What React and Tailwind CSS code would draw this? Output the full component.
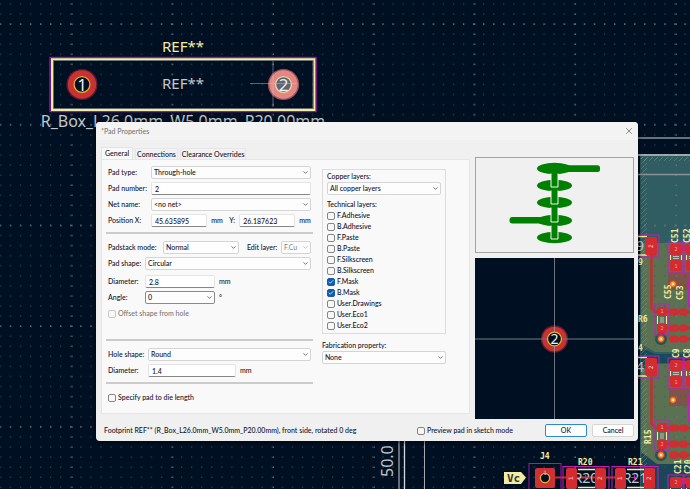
import React, { useState } from 'react';
import { Check, ChevronDown, X } from 'lucide-react';

const TECH_LAYERS = [
    'F.Adhesive',
    'B.Adhesive',
    'F.Paste',
    'B.Paste',
    'F.Silkscreen',
    'B.Silkscreen',
    'F.Mask',
    'B.Mask',
    'User.Drawings',
    'User.Eco1',
    'User.Eco2',
];

const MONO = '"DejaVu Sans Mono", monospace';
const SANS = '"Noto Sans", sans-serif';
const SILK = '#f2eda1';

// ---- board canvas ----

const SmallText = ({ x, y, children, vertical, size = 8, fill = SILK }) => (
    <text
        x={x}
        y={y}
        fontSize={size}
        fontFamily={MONO}
        fontWeight="bold"
        fill={fill}
        transform={vertical ? `rotate(-90 ${x} ${y})` : undefined}
    >
        {children}
    </text>
);

const Via = ({ x, y }) => (
    <g>
        <circle cx={x} cy={y} r="3.4" fill="#f0a020" stroke="#d0282d" strokeWidth="1" />
        <circle cx={x} cy={y} r="1.2" fill="#f4e9d0" />
    </g>
);

const RoundPad = ({ x, y, r, color, halo, ring, hole, label, size }) => (
    <g>
        <circle cx={x} cy={y} r={r + 1.4} fill={halo} />
        <circle cx={x} cy={y} r={r} fill={color} />
        <circle cx={x} cy={y} r={r / 2 + 0.8} fill={hole} stroke={ring} strokeWidth="1.3" />
        <text x={x} y={y + size * 0.36} fontSize={size} fontWeight="400" textAnchor="middle" fontFamily={SANS} fill="#f0f0f3">
            {label}
        </text>
    </g>
);

// Vertical 0402 part with its three traces to the right
const SmallResistor = ({ y }) => (
    <g>
        <circle cx="661" cy={y + 35} r="6" fill="#1d5560" />
        <path d={`M651.5 ${y - 50}V${y + 4}l4 4H690M661 ${y + 22}v13M666 ${y + 24}H690M672 ${y + 35}H690`} stroke="#d0282d" strokeWidth="2.4" fill="none" />
        {[8, 24, 35].map((dy) => (
            <g key={dy} fill="#d42b30">
                <rect x="669" y={y + dy - 3.5} width="10" height="7" rx="3.5" />
                <rect x="679" y={y + dy - 3.5} width="9" height="7" rx="3.5" />
                <circle cx="674" cy={y + dy} r="1" fill="#9b4a4a" />
                <circle cx="683" cy={y + dy} r="1" fill="#9b4a4a" />
            </g>
        ))}
        <rect x="657" y={y + 3} width="10" height="9" rx="2" fill="#d42b30" />
        <rect x="657" y={y + 20} width="10" height="9" rx="2" fill="#d42b30" />
        <path d={`M657.5 ${y + 12}v8M666.5 ${y + 12}v8`} stroke={SILK} />
        <path d={`M660 ${y + 14}h4M660 ${y + 16}h4M660 ${y + 18}h4`} stroke="#b9c0c4" />
        <text x="662" y={y + 9} fontSize="5" textAnchor="middle" fontFamily={MONO} fill="#efb0b0">1</text>
        <text x="662" y={y + 26} fontSize="5" textAnchor="middle" fontFamily={MONO} fill="#efb0b0">2</text>
        <rect x="655" y={y} width="14" height="31" fill="none" stroke="#c020b8" />
        <Via x={661} y={y + 35} />
    </g>
);

const Capacitor = ({ x, y }) => (
    <g>
        <rect x={x + 2} y={y + 2} width="12" height="11" rx="2" fill="#d42b30" />
        <rect x={x + 2} y={y + 18} width="12" height="11" rx="2" fill="#d42b30" />
        <path d={`M${x + 2.5} ${y + 13}v5M${x + 13.5} ${y + 13}v5`} stroke={SILK} />
        <path d={`M${x + 5} ${y + 14.5}h6M${x + 5} ${y + 16.5}h6`} stroke="#b9c0c4" />
        <text x={x + 8} y={y + 9} fontSize="5" textAnchor="middle" fontFamily={MONO} fill="#efb0b0">2</text>
        <text x={x + 8} y={y + 26} fontSize="5" textAnchor="middle" fontFamily={MONO} fill="#efb0b0">1</text>
        <rect x={x} y={y} width="15" height="31" fill="none" stroke="#c020b8" />
    </g>
);

const BigResistor = ({ x, label }) => (
    <g>
        <path d={`M${x + 15} 469.5h17M${x + 15} 487.5h17`} stroke={SILK} strokeWidth="1.5" />
        <text x={x + 23} y="483" fontSize="14" textAnchor="middle" fontFamily={SANS} fill="#c2c6cc">{label}</text>
        <path d={`M${x + 19} 477.5h7m-3.5 -3v6`} stroke="#c020b8" />
        <rect x={x + 3} y="468" width="11" height="21" rx="2" fill="#d42b30" />
        <rect x={x + 32} y="468" width="11" height="21" rx="2" fill="#d42b30" />
        <SmallText x={x + 10} y={480} size={6} vertical fill="#efb0b0">1</SmallText>
        <SmallText x={x + 39} y={480} size={6} vertical fill="#efb0b0">2</SmallText>
        <rect x={x} y="466.5" width="46" height="30" fill="none" stroke="#c020b8" />
    </g>
);

const EdgePad = ({ y, label }) => (
    <g>
        <path d={`M638 ${y + 1.5}h9M638 ${y + 20}h9`} stroke={SILK} strokeWidth="1.5" />
        <text x="636" y={y + 16} fontSize="14" fontFamily={SANS} fill="#c2c6cc">{label}</text>
        <rect x="645" y={y + 2} width="12" height="18" rx="2" fill="#d42b30" />
        <SmallText x={653} y={y + 13} size={6} vertical fill="#efb0b0">2</SmallText>
        <rect x="630" y={y} width="29" height="22" fill="none" stroke="#c020b8" />
    </g>
);

const Board = () => (
    <svg className="absolute inset-0 size-full" viewBox="0 0 690 489" preserveAspectRatio="xMinYMin slice" aria-hidden="true">
        <defs>
            <pattern id="dots" x="-1.2" y="2.9" width="10.07" height="10.07" patternUnits="userSpaceOnUse">
                <rect x="1" y="0.5" width="1.1" height="1.1" fill="#47505c" />
            </pattern>
            <pattern id="majorCols" x="70.6" y="2.9" width="100.7" height="10.07" patternUnits="userSpaceOnUse">
                <rect x="0.8" y="0.5" width="1.2" height="1.2" fill="#7b828b" />
            </pattern>
            <pattern id="majorRows" x="-1.2" y="23" width="10.07" height="100.7" patternUnits="userSpaceOnUse">
                <rect x="1" y="0.5" width="1.2" height="1.2" fill="#868c95" />
            </pattern>
            <pattern id="hatch" width="5" height="5" patternUnits="userSpaceOnUse">
                <path d="M0 5L5 0" stroke="#8aa58c" strokeWidth="0.7" opacity="0.6" />
            </pattern>
        </defs>
        <rect width="690" height="489" fill="#001023" />

        {/* copper zones */}
        <rect x="640" y="156" width="50" height="333" fill="#2f5d62" />
        <rect x="641" y="364" width="49" height="125" fill="#1a4658" />
        <path d="M641 243H690V352H655L641 344Z" fill="#5a7152" />
        <path d="M641 371L650 364H690V464H657L641 452Z" fill="#5a7152" />
        <path d="M641 348L655 354H690V363H648L641 370Z" fill="#17495c" />
        <rect x="668" y="272" width="22" height="18" fill="#7b5548" />
        <rect x="669" y="388" width="21" height="18" fill="#7b5548" />
        <rect x="641" y="157" width="6" height="310" fill="url(#hatch)" />
        <rect x="641" y="157" width="49" height="4" fill="url(#hatch)" />
        <rect width="690" height="489" fill="url(#dots)" />
        <rect width="690" height="489" fill="url(#majorCols)" />
        <rect width="690" height="489" fill="url(#majorRows)" />

        {/* frame and dimension lines */}
        <path d="M636 138H690M636 174.5H690" stroke="#8d9297" strokeWidth="1.5" />
        <path d="M404.5 440V489M636 155H690" stroke="#d5d8da" strokeWidth="1.3" />
        <path d="M399 440V489" stroke="#686d78" strokeWidth="2" />
        <path d="M424.5 440V489" stroke="#a6a9af" />
        <text x="393" y="477" fontSize="16" fontFamily={SANS} fill="#bfc1c6" transform="rotate(-90 393 477)">50.0</text>

        {/* right-hand parts */}
        <SmallResistor y={304} />
        <SmallResistor y={420} />
        <EdgePad y={235} label="9" />
        <EdgePad y={356} label="4" />
        <path d="M676 248H690M676 364H690M676 481H690" stroke="#d42b30" strokeWidth="6" />
        <Capacitor x={668} y={242} />
        <Capacitor x={684} y={242} />
        <Capacitor x={668} y={358} />
        <Capacitor x={684} y={358} />
        <Capacitor x={668} y={475} />
        <Capacitor x={684} y={475} />
        <path d="M690 278.5H688.5V307H690M690 394.5H688.5V422H690" stroke="#c020b8" fill="none" />
        <Via x={673} y={284} />
        <Via x={673} y={400} />
        <SmallText x={678} y={243} vertical>C51</SmallText>
        <SmallText x={690} y={243} vertical>C52</SmallText>
        <SmallText x={671} y={299} vertical>C55</SmallText>
        <SmallText x={683} y={300} vertical>C53</SmallText>
        <SmallText x={638} y={322}>R6</SmallText>
        <SmallText x={638} y={265}>9</SmallText>
        <SmallText x={638} y={351}>4</SmallText>
        <SmallText x={679} y={358} vertical>C9</SmallText>
        <SmallText x={690} y={358} vertical>C8</SmallText>
        <SmallText x={651} y={444} vertical>R15</SmallText>
        <SmallText x={681} y={474} vertical>C21</SmallText>
        <SmallText x={691} y={474} vertical>C20</SmallText>

        {/* bottom row */}
        <path d="M548 477.5H620" stroke="#d0282d" strokeWidth="2" />
        <path d="M504 472H521L526 477.5L521 484H504Z" fill={SILK} />
        <text x="507" y="482" fontSize="11" fontFamily={MONO} fontWeight="bold" fill="#33373c">Vc</text>
        <rect x="529" y="463.5" width="32" height="34" fill="none" stroke="#a01ba0" />
        <rect x="535" y="468" width="20" height="20" rx="2" fill="#cf3035" />
        <circle cx="545" cy="478" r="4.6" fill="#001023" stroke="#e3b32a" strokeWidth="1.3" />
        <text x="545" y="475" fontSize="6" textAnchor="middle" fontFamily={MONO} fill="#efb0b0">1</text>
        <BigResistor x={563} label="R20" />
        <BigResistor x={612} label="R21" />
        <SmallText x={540} y={459}>J4</SmallText>
        <SmallText x={578} y={465}>R20</SmallText>
        <SmallText x={628} y={465}>R21</SmallText>

        {/* selected resistor footprint */}
        <text x="183" y="52" fontSize="15" textAnchor="middle" fontFamily={SANS} fill={SILK}>REF**</text>
        <text x="183" y="89" fontSize="15" textAnchor="middle" fontFamily={SANS} fill="#c4c6ca">REF**</text>
        <text x="183" y="127" fontSize="16" textAnchor="middle" fontFamily={SANS} fill="#c4c6ca">R_Box_L26.0mm_W5.0mm_P20.00mm</text>
        <rect x="50" y="57.5" width="266" height="54" fill="none" stroke="#a512a5" strokeWidth="1.4" />
        <rect x="52" y="59.2" width="262.4" height="50.8" fill="none" stroke={SILK} strokeWidth="2" />
        <rect x="53.4" y="60.6" width="259.6" height="48" fill="none" stroke="#7c8086" strokeWidth="0.8" />
        <RoundPad x={82} y={84.5} r={14.2} color="#c93234" halo="#5c1c29" ring="#e6b422" hole="#001023" label="1" size={17} />
        <RoundPad x={283.5} y={84.5} r={14.2} color="#e48783" halo="#93565c" ring="#efd9a0" hole="#5d6673" label="2" size={17} />
        <path d="M250 83.5H296M273 61V107" stroke="#c9c9cf" opacity="0.45" />
    </svg>
);

// ---- dialog controls ----

const Select = ({ id, options, className = '', disabled, strong }) => (
    <div className={`relative ${className}`}>
        <select
            id={id}
            disabled={disabled}
            className={`block h-[13px] w-full appearance-none rounded-[2px] border bg-[#fdfdfd] pl-[2px] pr-3 text-[7px] leading-[11px] ${
                strong ? 'border-[#8a8a8a]' : 'border-[#d4d4d4]'
            } ${disabled ? 'text-[#8b8b8b] opacity-100' : 'text-[#111128]'}`}
        >
            {options.map((o) => (
                <option key={o}>{o}</option>
            ))}
        </select>
        <ChevronDown
            className={`pointer-events-none absolute right-[2px] top-[3px] size-[7px] ${disabled ? 'text-[#aaa]' : 'text-[#444]'}`}
            strokeWidth={2.5}
        />
    </div>
);

const TextField = ({ id, value, className = '' }) => {
    const [text, setText] = useState(value);
    return (
        <input
            id={id}
            type="text"
            value={text}
            onChange={(e) => setText(e.target.value)}
            className={`block h-[13px] min-w-0 rounded-[2px] border border-[#e4e4e4] border-b-[#868686] bg-white px-[3px] text-[7px] leading-[11px] ${className}`}
        />
    );
};

const CheckRow = ({ label, defaultChecked, disabled, className = '' }) => {
    const [checked, setChecked] = useState(!!defaultChecked);
    return (
        <label className={`flex items-center gap-[2px] whitespace-nowrap ${disabled ? 'text-[#777]' : ''} ${className}`}>
            <span className="relative flex">
                <input
                    type="checkbox"
                    checked={checked}
                    disabled={disabled}
                    onChange={(e) => setChecked(e.target.checked)}
                    className="size-2 appearance-none rounded-[2px] border border-[#858585] bg-[#f7f7f7] checked:border-[#0f5cb0] checked:bg-[#0f5cb0] disabled:border-[#c8c8c8]"
                />
                {checked && <Check className="pointer-events-none absolute left-[1px] top-[1px] size-[6px] text-white" strokeWidth={3} />}
            </span>
            {label}
        </label>
    );
};

const Row = ({ children, className = '' }) => <div className={`flex h-[13px] items-center ${className}`}>{children}</div>;

const Rule = ({ className = '' }) => <hr className={`h-[2px] border-0 bg-[#cbcbcb] ${className}`} />;

const PadForm = () => (
    <div className="flex min-w-0 flex-col pt-[6px]">
        <div className="flex flex-col gap-[3px] px-[2px]">
            <Row>
                <label htmlFor="padType" className="w-[43px]">Pad type:</label>
                <Select id="padType" options={['Through-hole', 'SMD', 'Edge connector']} className="flex-1" />
            </Row>
            <Row>
                <label htmlFor="padNumber" className="w-[43px] whitespace-nowrap">Pad number:</label>
                <TextField id="padNumber" value="2" className="flex-1" />
            </Row>
            <Row>
                <label htmlFor="netName" className="w-[43px]">Net name:</label>
                <Select id="netName" options={['<no net>']} className="flex-1" />
            </Row>
            <Row>
                <label htmlFor="posX" className="w-[43px]">Position X:</label>
                <TextField id="posX" value="45.635895" className="flex-1" />
                <span className="ml-1 w-[18px]">mm</span>
                <label htmlFor="posY" className="w-[10px]">Y:</label>
                <TextField id="posY" value="26.187623" className="flex-1" />
                <span className="ml-1">mm</span>
            </Row>
        </div>
        <Rule className="mt-[5px]" />
        <div className="mt-[7px] flex flex-col gap-[3px] px-[2px]">
            <Row>
                <label htmlFor="padstack" className="w-[55px] whitespace-nowrap">Padstack mode:</label>
                <Select id="padstack" options={['Normal', 'Front/Inner/Back', 'Custom']} className="flex-1" />
                <label htmlFor="editLayer" className="ml-2 w-[34px] whitespace-nowrap">Edit layer:</label>
                <Select id="editLayer" options={['F.Cu']} disabled className="w-[30px]" />
            </Row>
            <Row>
                <label htmlFor="padShape" className="w-[37px] whitespace-nowrap">Pad shape:</label>
                <Select id="padShape" options={['Circular', 'Oval', 'Rectangular']} className="flex-1" />
            </Row>
            <Row className="mt-[2px]">
                <label htmlFor="padDiameter" className="w-[37px]">Diameter:</label>
                <TextField id="padDiameter" value="2.8" className="w-[70px]" />
                <span className="ml-1">mm</span>
            </Row>
            <Row>
                <label htmlFor="angle" className="w-[37px]">Angle:</label>
                <Select id="angle" options={['0', '90', '180', '-90']} strong className="w-[70px]" />
                <span className="ml-1">°</span>
            </Row>
            <Row>
                <CheckRow label="Offset shape from hole" disabled />
            </Row>
        </div>
        <Rule className="mt-[19px]" />
        <div className="mt-[7px] flex flex-col gap-[3px] px-[2px]">
            <Row>
                <label htmlFor="holeShape" className="w-[40px] whitespace-nowrap">Hole shape:</label>
                <Select id="holeShape" options={['Round', 'Oblong']} className="flex-1" />
            </Row>
            <Row>
                <label htmlFor="holeDiameter" className="w-[40px]">Diameter:</label>
                <TextField id="holeDiameter" value="1.4" className="w-[88px]" />
                <span className="ml-1">mm</span>
            </Row>
        </div>
        <Rule className="mt-[5px]" />
        <Row className="mb-[9px] mt-[7px] px-[2px]">
            <CheckRow label="Specify pad to die length" />
        </Row>
    </div>
);

const LayersForm = () => (
    <div className="flex min-w-0 flex-col pt-[9px]">
        <fieldset className="flex flex-col border border-[#dcdcdc] px-1 pb-[2px]">
            <label htmlFor="copper" className="mt-[1px] leading-[11px]">Copper layers:</label>
            <Select id="copper" options={['All copper layers', 'F.Cu, B.Cu and connected layers']} />
            <span className="mt-1 leading-[11px]">Technical layers:</span>
            {TECH_LAYERS.map((name) => (
                <CheckRow key={name} label={name} defaultChecked={name.endsWith('.Mask')} className="h-[11px]" />
            ))}
        </fieldset>
        <label htmlFor="fabProp" className="mt-[6px] leading-[11px]">Fabrication property:</label>
        <Select id="fabProp" options={['None', 'BGA pad', 'Test point pad']} />
    </div>
);

const StackDiagram = () => {
    const rings = [11, 28, 45, 63, 80];
    return (
        <svg viewBox="0 0 157 94" className="w-full" aria-hidden="true">
            {rings.map((y) => (
                <ellipse key={y} cx="78.5" cy={y - 0.5} rx="17.5" ry="5.7" fill="#008000" />
            ))}
            <rect x="85" y="7.3" width="39" height="6.6" rx="2.5" fill="#008000" />
            <rect x="33.5" y="59" width="38" height="6.6" rx="3" fill="#008000" />
            {rings.slice(0, 4).map((y, i) => (
                <path
                    key={y}
                    d={`M75 ${y + 4.5}V${rings[i + 1] + 1}H82V${y + 4.5}`}
                    fill="#008000"
                    stroke="#f4f4f4"
                    strokeWidth="1"
                />
            ))}
        </svg>
    );
};

const PadPreview = () => (
    <svg viewBox="0 0 159 161" className="w-full bg-[#001023]" aria-hidden="true">
        <RoundPad x={79.5} y={81} r={12.3} color="#c93234" halo="#5c1c29" ring="#e6b422" hole="#001023" label="2" size={14} />
        <path d="M79.5 0V74M79.5 88V161" stroke="#9aa0a8" opacity="0.7" />
        <path d="M0 81H72M87 81H159" stroke="#6f7682" strokeWidth="1.4" opacity="0.7" />
    </svg>
);

const TABS = ['General', 'Connections', 'Clearance Overrides'];

const PadProperties = () => {
    const [tab, setTab] = useState('General');

    return (
        <div
            role="dialog"
            aria-label="Pad Properties"
            className="absolute left-24 right-[52px] top-[122px] flex flex-col overflow-hidden rounded-[4px] bg-[#f0f0f0] text-[7px] font-medium leading-[11px] text-[#111128] shadow-[0_1px_5px_rgba(0,0,0,0.7)]"
        >
            <header className="flex h-[18px] items-center justify-between bg-[#f3f3f3] pl-[5px] pr-1 text-[#777]">
                <span>*Pad Properties</span>
                <button type="button" aria-label="Close">
                    <X className="size-[10px]" strokeWidth={2} />
                </button>
            </header>

            <div className="flex gap-[5px] pl-[5px] pr-1">
                <div className="flex min-w-0 flex-1 flex-col pb-[5px] pt-[7px]">
                    <div role="tablist" className="flex h-3 items-end gap-[2px]">
                        {TABS.map((name) => (
                            <button
                                key={name}
                                type="button"
                                role="tab"
                                aria-selected={tab === name}
                                onClick={() => setTab(name)}
                                className={
                                    tab === name
                                        ? 'h-3 whitespace-nowrap border border-b-0 border-[#e3e3e3] bg-[#f9f9f9] px-[3px]'
                                        : 'h-[11px] whitespace-nowrap border border-b-0 border-[#e6e6e6] bg-[#f2f2f2] px-[1px]'
                                }
                            >
                                {name}
                            </button>
                        ))}
                    </div>
                    <div className="grid grid-cols-[5fr_3fr] gap-[9px] border border-[#e6e6e6] bg-[#f9f9f9] pl-1 pr-[23px]">
                        <PadForm />
                        <LayersForm />
                    </div>
                </div>
                <div className="flex w-[159px] flex-col gap-[5px] pt-[17px]">
                    <div className="border border-[#a3a3a3]">
                        <StackDiagram />
                    </div>
                    <PadPreview />
                </div>
            </div>

            <footer className="flex items-center pb-1 pl-2 pr-1 pt-[5px]">
                <span className="flex-1 whitespace-nowrap">
                    Footprint REF** (R_Box_L26.0mm_W5.0mm_P20.00mm), front side, rotated 0 deg
                </span>
                <CheckRow label="Preview pad in sketch mode" />
                <button type="button" className="ml-8 h-[13px] w-[42px] rounded-[2px] border border-[#2f86d1] bg-[#fdfdfd]">
                    OK
                </button>
                <button type="button" className="ml-[5px] h-[13px] w-[42px] rounded-[2px] border border-[#d6d6d6] bg-[#fdfdfd]">
                    Cancel
                </button>
            </footer>
        </div>
    );
};

const App = () => (
    <main className="relative min-h-screen w-full overflow-hidden bg-[#001023] font-['Lato','Noto_Sans',sans-serif]">
        <Board />
        <PadProperties />
    </main>
);

export default App;
